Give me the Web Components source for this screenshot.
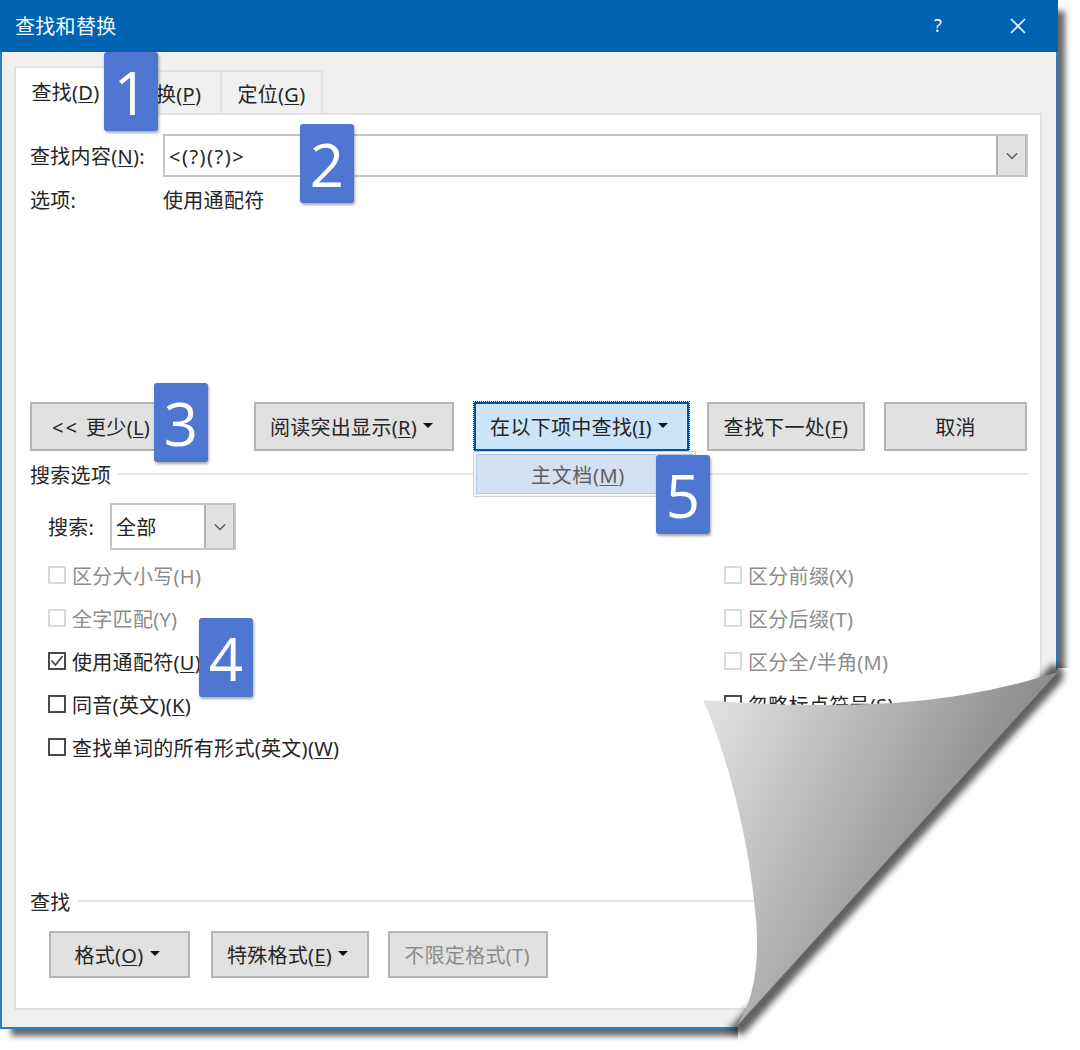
<!DOCTYPE html>
<html lang="zh">
<head>
<meta charset="utf-8">
<title>查找和替换</title>
<style>
  html, body { margin: 0; background: #fff; }
  body { font: 20px/28px "Noto Sans", "Noto Sans CJK SC", sans-serif; letter-spacing: .3px; color: #262626; }
  u { text-underline-offset: 2px; text-decoration-thickness: 1px; }
</style>
</head>
<body>
<page-stage>
  <find-dialog heading="查找和替换">
    <tab-strip slot="tabs">
      <tab-item active>查找(<u>D</u>)</tab-item>
      <tab-item style="width:105px">替换(<u>P</u>)</tab-item>
      <tab-item style="width:101px">定位(<u>G</u>)</tab-item>
    </tab-strip>

    <form-row style="margin-top:19px;height:43px">
      <span style="width:133px">查找内容(<u>N</u>):</span>
      <combo-box value="&lt;(?)(?)&gt;" style="flex:1;letter-spacing:1.5px"></combo-box>
    </form-row>
    <form-row style="margin-top:9px;height:28px">
      <span style="width:133px">选项:</span>
      <span>使用通配符</span>
    </form-row>

    <form-row style="margin-top:188px;height:49px">
      <push-button style="width:150px;padding-right:8px"><span style="letter-spacing:2px">&lt;&lt; </span>更少(<u>L</u>)</push-button>
      <push-button caret style="width:200px;margin-left:74px">阅读突出显示(<u>R</u>)</push-button>
      <push-button caret focused style="width:215px;margin-left:20px">在以下项中查找(<u>I</u>)
        <drop-menu slot="menu">主文档(<u>M</u>)</drop-menu>
      </push-button>
      <push-button style="width:158px;margin-left:18px">查找下一处(<u>F</u>)</push-button>
      <push-button style="width:143px;margin-left:19px">取消</push-button>
    </form-row>

    <section-rule style="margin-top:10px">搜索选项</section-rule>

    <form-row style="margin-top:14px;height:47px;padding-left:18px">
      <span style="width:62px">搜索:</span>
      <combo-box value="全部" style="width:126px"></combo-box>
    </form-row>

    <option-grid style="margin-top:5px">
      <check-option disabled>区分大小写(H)</check-option>
      <check-option disabled>区分前缀(X)</check-option>
      <check-option disabled>全字匹配(Y)</check-option>
      <check-option disabled>区分后缀(T)</check-option>
      <check-option checked>使用通配符(<u>U</u>)</check-option>
      <check-option disabled>区分全/半角(M)</check-option>
      <check-option>同音(英文)(<u>K</u>)</check-option>
      <check-option>忽略标点符号(<u>S</u>)</check-option>
      <check-option>查找单词的所有形式(英文)(<u>W</u>)</check-option>
    </option-grid>

    <section-rule style="margin-top:118px">查找</section-rule>

    <form-row style="margin-top:15px;height:47px;padding-left:19px">
      <push-button caret style="width:141px">格式(<u>O</u>)</push-button>
      <push-button caret style="width:158px;margin-left:21px">特殊格式(<u>E</u>)</push-button>
      <push-button disabled style="width:160px;margin-left:19px;padding-right:2px">不限定格式(T)</push-button>
    </form-row>
  </find-dialog>

  <page-curl></page-curl>

  <step-badge style="left:104px;top:52px">1</step-badge>
  <step-badge style="left:300px;top:124px">2</step-badge>
  <step-badge style="left:154px;top:383px">3</step-badge>
  <step-badge style="left:199px;top:618px">4</step-badge>
  <step-badge style="left:656px;top:455px">5</step-badge>
</page-stage>

<script>
class PageStage extends HTMLElement {
  constructor() {
    super();
    this.attachShadow({ mode: 'open' });
    this.shadowRoot.innerHTML = `
<style>
  :host { display: block; position: relative; width: 1080px; height: 1050px; overflow: hidden; filter: blur(.45px); }
</style>
<slot></slot>`;
  }
}

class FindDialog extends HTMLElement {
  constructor() {
    super();
    this.attachShadow({ mode: 'open' });
    this.shadowRoot.innerHTML = `
<style>
  :host {
    display: flex; flex-direction: column; box-sizing: border-box;
    width: 1058px; height: 1029px;
    background: #f0f0f0; border: 2px solid #2a7cc4; border-top: 0;
    box-shadow: 9px 9px 6px -2px rgba(0,0,0,.6);
  }
  .title { display: flex; align-items: center; height: 52px; margin: 0 -2px; padding-left: 15px; background: #0063b1; color: #f2f6fa; flex: none; }
  .title span { flex: 1; padding-top: 2px; }
  .help { flex: none !important; width: 20px; margin-right: 62px; padding: 0 0 2px !important; text-align: center; font-size: 18px; }
  .close { width: 16px; height: 16px; margin-right: 32px; }
  .tabs { margin: 14px 14px 0 12px; flex: none; }
  .panel {
    display: flex; flex-direction: column; box-sizing: border-box;
    height: 897px; margin: 0 14px 0 12px; padding: 0 12px 0 14px;
    background: #fff; border: 2px solid #e3e3e3;
  }
</style>
<div class="title">
  <span id="heading"></span>
  <span class="help">?</span>
  <svg class="close" viewBox="0 0 16 16" fill="none" stroke="#f2f6fa" stroke-width="1.6"><path d="M1 1 15 15M15 1 1 15"/></svg>
</div>
<div class="tabs"><slot name="tabs"></slot></div>
<div class="panel"><slot></slot></div>`;
    this.shadowRoot.getElementById('heading').textContent = this.getAttribute('heading');
  }
}

class TabStrip extends HTMLElement {
  constructor() {
    super();
    this.attachShadow({ mode: 'open' });
    this.shadowRoot.innerHTML = `
<style>
  :host { display: flex; align-items: flex-end; height: 47px; position: relative; z-index: 1; }
</style>
<slot></slot>`;
  }
}

class TabItem extends HTMLElement {
  constructor() {
    super();
    this.attachShadow({ mode: 'open' });
    this.shadowRoot.innerHTML = `
<style>
  :host {
    display: flex; align-items: center; justify-content: center; box-sizing: border-box;
    height: 43px; background: #f0f0f0;
    border: 2px solid #e3e3e3; border-left-width: 0; border-bottom: 0; padding-top: 5px;
  }
  :host([active]) {
    width: 103px; height: 49px; margin-bottom: -2px; background: #fff;
    border-left-width: 2px; padding-top: 2px;
  }
</style>
<slot></slot>`;
  }
}

class FormRow extends HTMLElement {
  constructor() {
    super();
    this.attachShadow({ mode: 'open' });
    this.shadowRoot.innerHTML = `
<style>
  :host { display: flex; align-items: center; flex: none; }
  ::slotted(span) { padding-top: 2px; }
</style>
<slot></slot>`;
  }
}

class ComboBox extends HTMLElement {
  constructor() {
    super();
    this.attachShadow({ mode: 'open' });
    this.shadowRoot.innerHTML = `
<style>
  :host { display: flex; box-sizing: border-box; height: 100%; background: #fff; border: 2px solid #c4c4c4; }
  .value { flex: 1; display: flex; align-items: center; padding: 2px 0 0 4px; white-space: nowrap; overflow: hidden; }
  .drop { display: flex; align-items: center; justify-content: center; box-sizing: border-box; width: 30px; background: #e1e1e1; border-left: 2px solid #b4b4b4; border-right: 1px solid #b4b4b4; }
</style>
<div class="value"></div>
<div class="drop"><svg width="12" height="8" viewBox="0 0 12 8" fill="none" stroke="#5a5a5a" stroke-width="1.5"><path d="M1 1.5 6 6.5 11 1.5"/></svg></div>`;
    this.shadowRoot.querySelector('.value').textContent = this.getAttribute('value');
  }
}

class PushButton extends HTMLElement {
  constructor() {
    super();
    this.attachShadow({ mode: 'open' });
    this.shadowRoot.innerHTML = `
<style>
  :host {
    display: flex; align-items: center; justify-content: center; gap: 6px; position: relative;
    box-sizing: border-box; height: 100%; flex: none;
    background: #e1e1e1; border: 2px solid #b4b4b4; white-space: nowrap;
  }
  :host([caret]) { padding-right: 5px; }
  :host([focused]) { background: #cce4f7; border-color: #005499; outline: 1px dotted #222; }
  :host([disabled]) { color: #8c8c8c; }
  .label { padding-top: 2px; }
  .caret { display: none; width: 0; height: 0; border: 5.5px solid transparent; border-top: 5.5px solid #111; border-bottom: 0; margin-top: -3px; }
  :host([caret]) .caret { display: block; }
</style>
<span class="label"><slot></slot></span>
<i class="caret"></i>
<slot name="menu"></slot>`;
  }
}

class DropMenu extends HTMLElement {
  constructor() {
    super();
    this.attachShadow({ mode: 'open' });
    this.shadowRoot.innerHTML = `
<style>
  :host {
    display: block; position: absolute; left: -3px; top: 47px; z-index: 2;
    box-sizing: border-box; width: 223px; height: 46px; padding: 2px;
    background: #f4f4f4; border: 1px solid #cfcfcf; color: #5f5f5f; letter-spacing: .6px;
  }
  .item { display: flex; align-items: center; justify-content: center; height: 100%; box-sizing: border-box; background: #d5e1f2; border: 1px solid #afc8ea; padding: 4px 13px 0 0; }
</style>
<div class="item"><span><slot></slot></span></div>`;
  }
}

class SectionRule extends HTMLElement {
  constructor() {
    super();
    this.attachShadow({ mode: 'open' });
    this.shadowRoot.innerHTML = `
<style>
  :host { display: flex; align-items: center; gap: 7px; height: 28px; flex: none; }
  span { padding-top: 2px; }
  .line { flex: 1; height: 2px; background: #e6e6e6; margin-top: -3px; }
</style>
<span><slot></slot></span>
<div class="line"></div>`;
  }
}

class OptionGrid extends HTMLElement {
  constructor() {
    super();
    this.attachShadow({ mode: 'open' });
    this.shadowRoot.innerHTML = `
<style>
  :host { display: grid; grid-template-columns: 676px 1fr; grid-auto-rows: 43px; padding-left: 18px; flex: none; }
</style>
<slot></slot>`;
  }
}

class CheckOption extends HTMLElement {
  constructor() {
    super();
    this.attachShadow({ mode: 'open' });
    this.shadowRoot.innerHTML = `
<style>
  :host { display: flex; align-items: center; gap: 6px; white-space: nowrap; }
  :host([disabled]) { color: #8c8c8c; }
  .box { display: block; box-sizing: border-box; width: 18px; height: 18px; flex: none; margin-top: -4px; border: 2px solid #4a4a4a; background: #fff; }
  :host([disabled]) .box { border-color: #dadada; }
  svg { display: none; }
  :host([checked]) svg { display: block; }
</style>
<span class="box"><svg width="14" height="14" viewBox="0 0 14 14" fill="none" stroke="#3c3c3c" stroke-width="1.6"><path d="M1.5 6.5 5.5 11 12.5 2"/></svg></span>
<span><slot></slot></span>`;
  }
}

class PageCurl extends HTMLElement {
  constructor() {
    super();
    this.attachShadow({ mode: 'open' });
    this.shadowRoot.innerHTML = `
<style>
  :host { display: block; position: absolute; inset: 0; }
  svg { display: block; }
</style>
<svg width="1080" height="1050" viewBox="0 0 1080 1050">
  <defs>
    <linearGradient id="sheet" gradientUnits="userSpaceOnUse" x1="703" y1="700" x2="975" y2="836">
      <stop offset="0" stop-color="#e4e4e4"/>
      <stop offset="1" stop-color="#8c8c8c"/>
    </linearGradient>
    <filter id="soft" x="-10%" y="-10%" width="120%" height="120%"><feGaussianBlur stdDeviation="3"/></filter>
  </defs>
  <path fill="#fff" d="M1058 668H1080V1050H738V1027Z"/>
  <path fill="#222" fill-opacity=".72" filter="url(#soft)" d="M1052 664 1063 668V680L743 1035 728 1030Z"/>
  <path fill="url(#sheet)" d="M703 700Q800 708 893 703 980 697 1058 672L735 1028C757 1000 760 950 755 910 750 850 730 760 703 700Z"/>
</svg>`;
  }
}

class StepBadge extends HTMLElement {
  constructor() {
    super();
    this.attachShadow({ mode: 'open' });
    this.shadowRoot.innerHTML = `
<style>
  :host {
    display: flex; align-items: center; justify-content: center; position: absolute; z-index: 5;
    width: 54px; height: 79px; border-radius: 3px;
    background: #4f76d0; color: #fff; box-shadow: 1px 2px 3px rgba(0,0,0,.35);
    font: 400 60px/1 "Open Sans", "Liberation Sans", sans-serif; letter-spacing: 0;
  }
</style>
<slot></slot>`;
  }
}

customElements.define('page-stage', PageStage);
customElements.define('find-dialog', FindDialog);
customElements.define('tab-strip', TabStrip);
customElements.define('tab-item', TabItem);
customElements.define('form-row', FormRow);
customElements.define('combo-box', ComboBox);
customElements.define('push-button', PushButton);
customElements.define('drop-menu', DropMenu);
customElements.define('section-rule', SectionRule);
customElements.define('option-grid', OptionGrid);
customElements.define('check-option', CheckOption);
customElements.define('page-curl', PageCurl);
customElements.define('step-badge', StepBadge);
</script>
</body>
</html>
